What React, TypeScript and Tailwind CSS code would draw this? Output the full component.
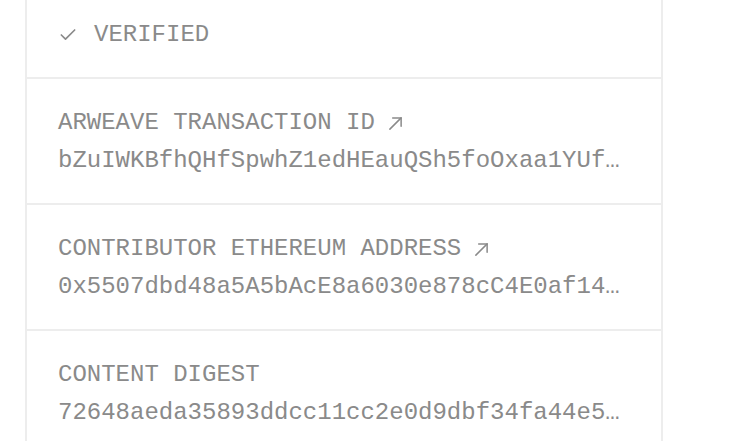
// Verification details card with monospace label/value rows
import React from "react";

const mono = { fontFamily: '"Liberation Mono", "DejaVu Sans Mono", monospace' };

const CheckIcon = () => (
  <svg
    className="w-[20px] h-[20px] shrink-0"
    viewBox="0 0 24 24"
    fill="none"
    stroke="currentColor"
    strokeWidth={2}
    strokeLinecap="round"
    strokeLinejoin="round"
  >
    <path d="M20 6 9 17l-5-5" />
  </svg>
);

const ArrowIcon = () => (
  <svg
    className="w-[15px] h-[15px] ml-[13px] shrink-0"
    viewBox="0 0 16 16"
    fill="none"
    stroke="currentColor"
    strokeWidth={1.6}
    strokeLinecap="round"
    strokeLinejoin="round"
  >
    <path d="M2 14 14 2" />
    <path d="M5 2h9v9" />
  </svg>
);

// values are shown already shortened, as the card does
const rows = [
  {
    label: "ARWEAVE TRANSACTION ID",
    value: "bZuIWKBfhQHfSpwhZ1edHEauQSh5foOxaa1YUf…",
    link: true,
  },
  {
    label: "CONTRIBUTOR ETHEREUM ADDRESS",
    value: "0x5507dbd48a5A5bAcE8a6030e878cC4E0af14…",
    link: true,
  },
  {
    label: "CONTENT DIGEST",
    value: "72648aeda35893ddcc11cc2e0d9dbf34fa44e5…",
    link: false,
  },
];

const App = () => (
  <div className="w-[739px] h-[441px] bg-white overflow-hidden pl-[25px]">
    <div
      className="w-[638px] border-x-2 border-[#ededed] text-[#8a8a8a] text-[24px] leading-[38px]"
      style={mono}
    >
      <div className="flex items-center gap-[16px] pl-[31px] pt-[16px] pb-[23px] border-b-2 border-[#ededed]">
        <CheckIcon />
        <span>VERIFIED</span>
      </div>
      {rows.map((row) => (
        <div
          key={row.label}
          className="pl-[31px] pr-[24px] pt-[25px] pb-[23px] border-b-2 border-[#ededed]"
        >
          <div className="flex items-center whitespace-nowrap">
            <span>{row.label}</span>
            {row.link && <ArrowIcon />}
          </div>
          <div className="whitespace-nowrap">{row.value}</div>
        </div>
      ))}
    </div>
  </div>
);

export default App;
